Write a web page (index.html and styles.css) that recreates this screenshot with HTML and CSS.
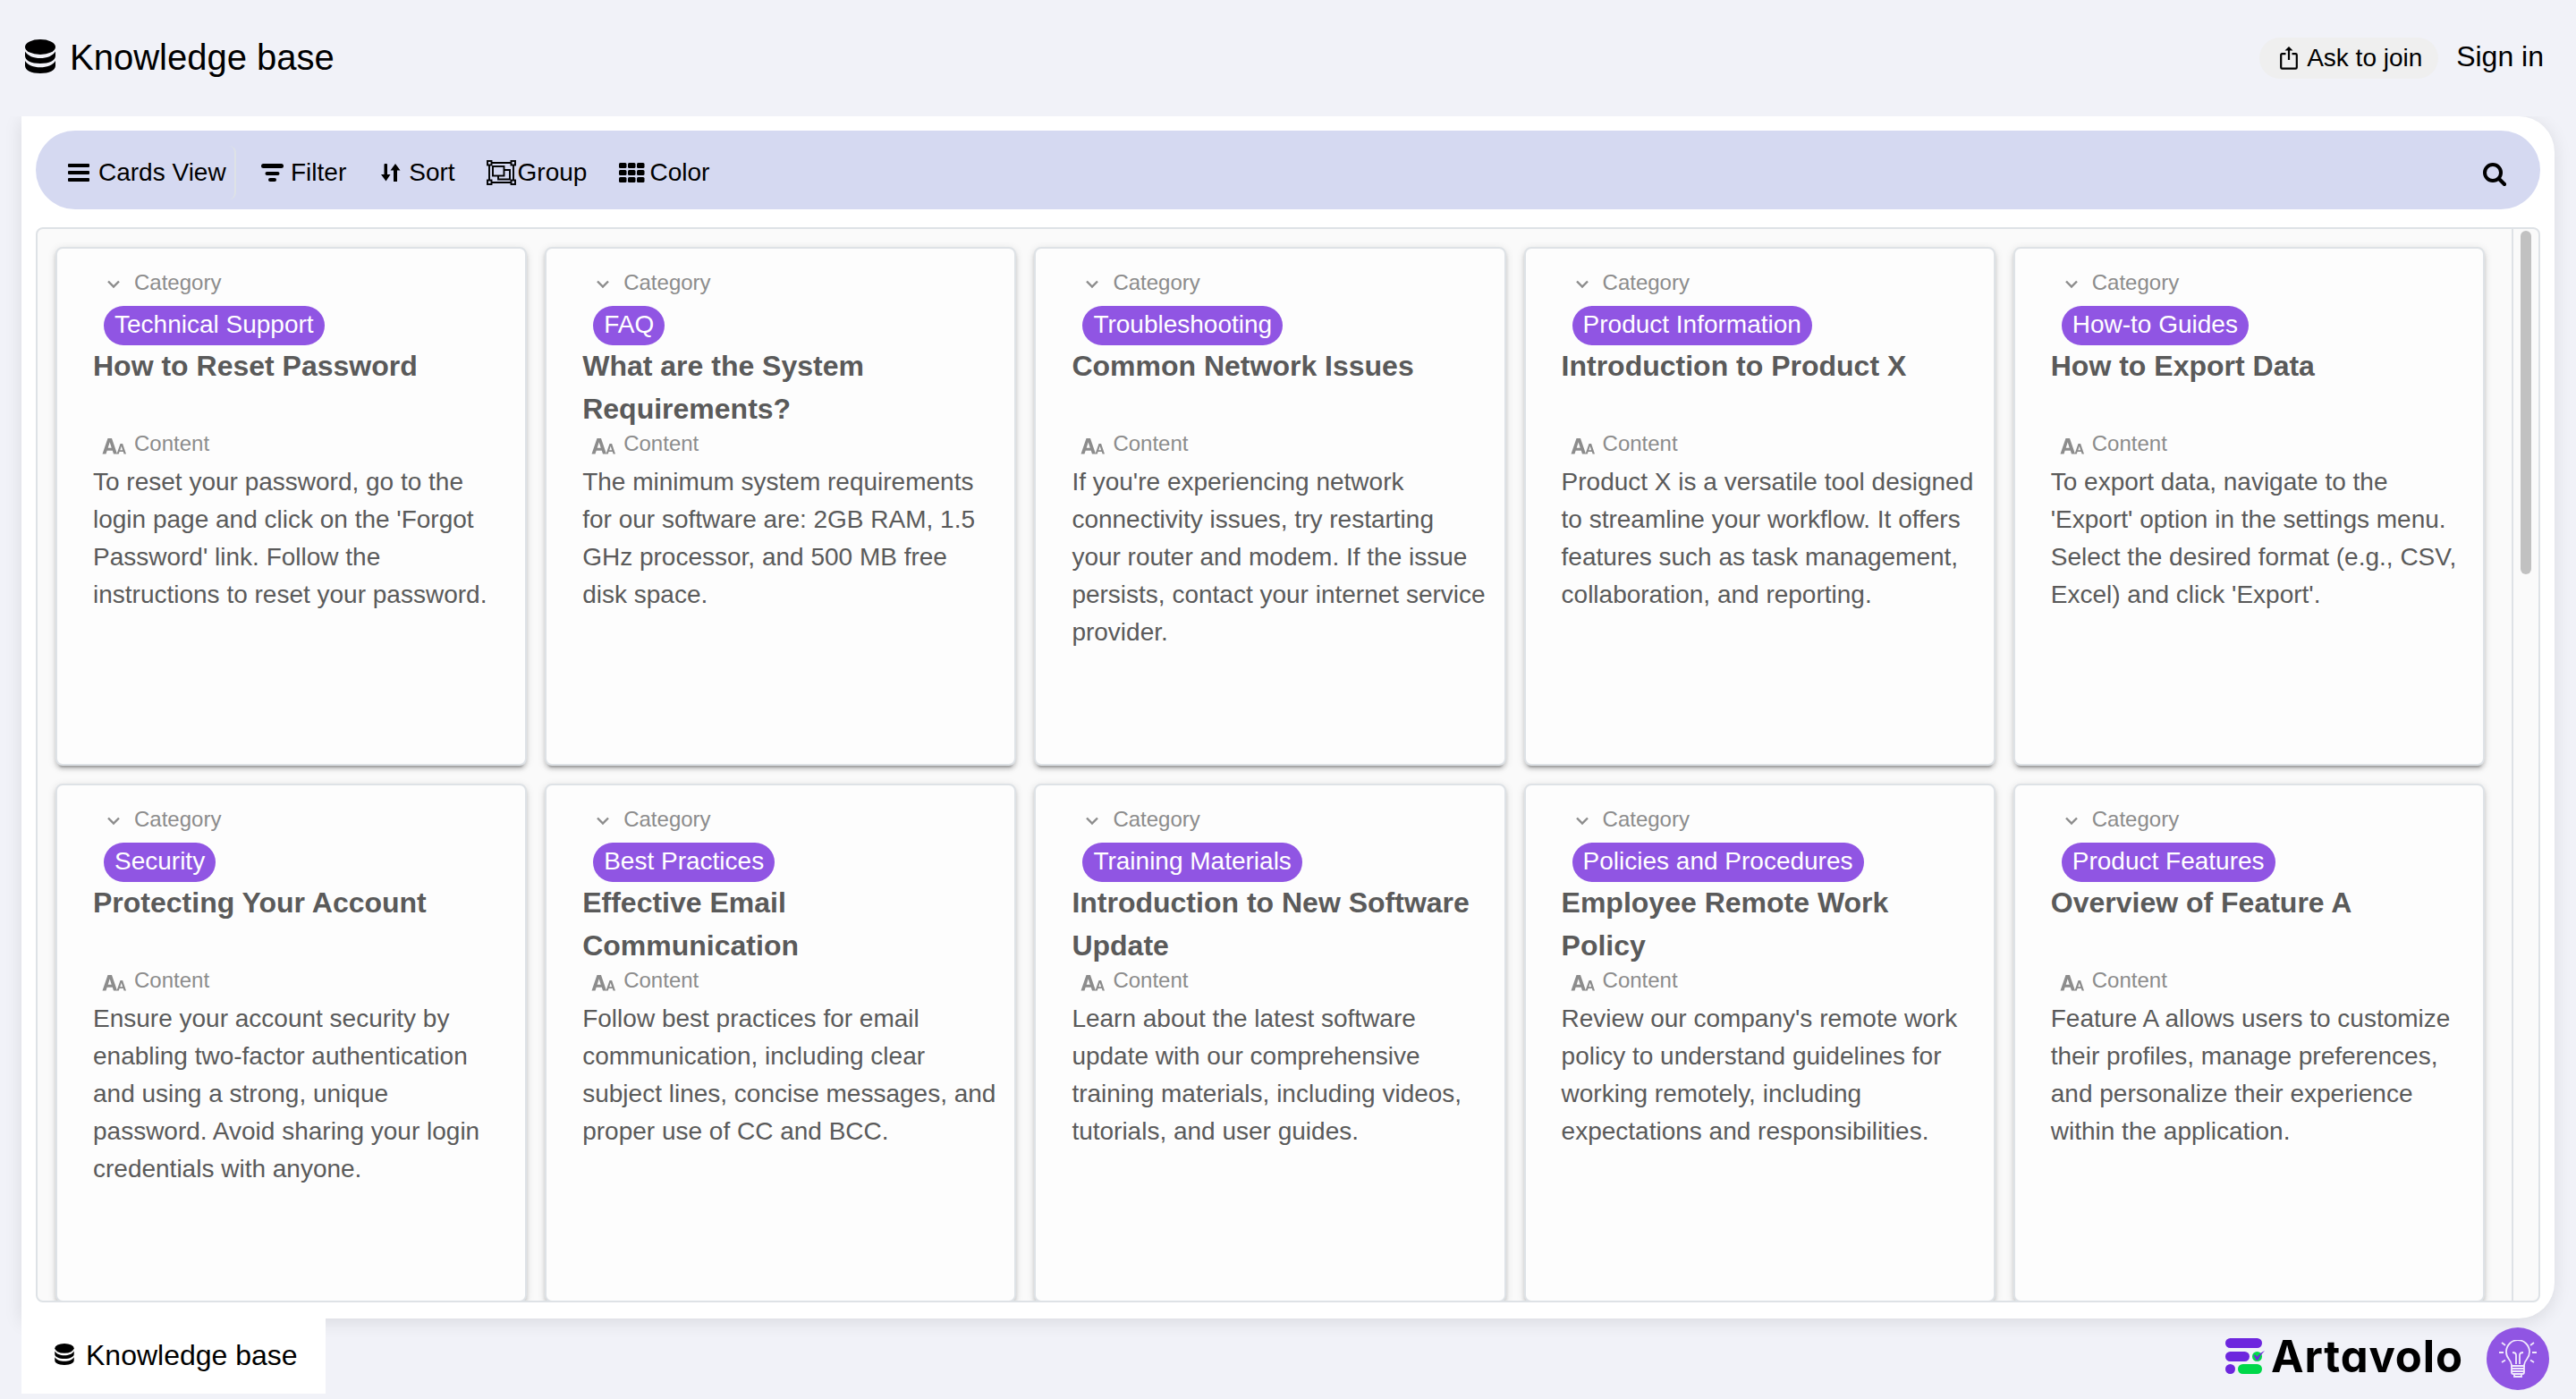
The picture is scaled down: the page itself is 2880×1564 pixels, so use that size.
FILE: index.html
```html
<!DOCTYPE html>
<html lang="en">
<head>
  <meta charset="UTF-8">
  <meta name="viewport" content="width=device-width, initial-scale=1.0">
  <title>Knowledge base</title>
  <link rel="stylesheet" href="styles.css">
</head>
<body>
  <!-- shared icons -->
  <svg class="defs" width="0" height="0">
    <symbol id="database" viewBox="0 0 34 38">
      <ellipse cx="17" cy="8.5" rx="17" ry="8.5"/>
      <path d="M0 13.500c3 5 9.500 7.500 17 7.500s14-2.500 17-7.500v5c0 5-7 8.500-17 8.500s-17-3.500-17-8.500z"/>
      <path d="M0 24c3 5 9.500 7.300 17 7.300s14-2.300 17-7.300v5.500c0 5-7 8.500-17 8.500s-17-3.500-17-8.500z"/>
    </symbol>
    <symbol id="chevron" viewBox="0 0 14 10">
      <path d="M1 1.500L7 7.500L13 1.500" fill="none" stroke="currentColor" stroke-width="2.400"/>
    </symbol>
    <symbol id="letters" viewBox="0 0 26 18">
      <path fill-rule="evenodd" d="M0 17.500L6 0h4.500l6 17.500h-4l-1.200-3.700H5.200L4 17.500zM6.200 10.800h4L8.200 4.300z"/>
      <path fill-rule="evenodd" d="M16 17.500L20 6h2.600l3.900 11.500h-2.400l-.8-2.400h-4.200l-.8 2.400zM19.800 13.200h2.800L21.200 8.800z"/>
    </symbol>
  </svg>

  <header class="header">
    <div class="title">
      <svg class="title-icon"><use href="#database"/></svg>
      <span>Knowledge base</span>
    </div>
    <div class="account">
      <button class="join">
        <svg width="20" height="26" viewBox="0 0 20 26">
          <path d="M6.500 8.200H2.500Q1.200 8.200 1.200 9.500V23.300Q1.200 24.700 2.500 24.700H17.500Q18.800 24.700 18.800 23.300V9.500Q18.800 8.200 17.500 8.200H13.500" fill="none" stroke="#000" stroke-width="2.200"/>
          <path d="M10 2V15" stroke="#000" stroke-width="2.200"/>
          <path d="M10 0L14.500 4.500H5.500z"/>
        </svg>
        <span>Ask to join</span>
      </button>
      <a class="signin">Sign in</a>
    </div>
  </header>

  <main class="panel">
    <div class="toolbar">
      <button class="tool view">
        <svg width="24" height="20" viewBox="0 0 24 20">
          <rect width="24" height="4" rx="1"/><rect y="8" width="24" height="4" rx="1"/><rect y="16" width="24" height="4" rx="1"/>
        </svg>
        Cards View
      </button>
      <button class="tool filter">
        <svg width="25" height="20" viewBox="0 0 25 20">
          <rect width="25" height="5" rx="2.500"/><rect x="4.500" y="9" width="16" height="4" rx="2"/><rect x="8" y="16" width="9" height="4" rx="2"/>
        </svg>
        Filter
      </button>
      <button class="tool sort">
        <svg width="22" height="20" viewBox="0 0 22 20">
          <path d="M3.500 1a1 1 0 0 1 1-1H6a1 1 0 0 1 1 1v11h3.500L5.500 19.500L0 12h3.500z"/>
          <path d="M14 19.500V7.500H10.500L16 0l5.500 7.500H18v12a1 1 0 0 1-1 1h-2a1 1 0 0 1-1-1z"/>
        </svg>
        Sort
      </button>
      <button class="tool group">
        <svg width="33" height="28" viewBox="0 0 33 28" fill="none" stroke="#000" stroke-width="1.900">
          <path d="M6 3H27M6 25H27M3 6V22M30 6V22"/>
          <rect x="1" y="1" width="4.500" height="4.500"/><rect x="27.500" y="1" width="4.500" height="4.500"/>
          <rect x="1" y="22.500" width="4.500" height="4.500"/><rect x="27.500" y="22.500" width="4.500" height="4.500"/>
          <rect x="7" y="7" width="12.500" height="10.500"/>
          <path d="M19.500 11H26V21.500H13V17.500"/>
        </svg>
        Group
      </button>
      <button class="tool color">
        <svg width="29" height="22" viewBox="0 0 29 22">
          <rect width="8.500" height="6" rx="1.500"/><rect x="10" width="8.500" height="6" rx="1.500"/><rect x="20" width="8.500" height="6" rx="1.500"/>
          <rect y="8" width="8.500" height="6" rx="1.500"/><rect x="10" y="8" width="8.500" height="6" rx="1.500"/><rect x="20" y="8" width="8.500" height="6" rx="1.500"/>
          <rect y="16" width="8.500" height="6" rx="1.500"/><rect x="10" y="16" width="8.500" height="6" rx="1.500"/><rect x="20" y="16" width="8.500" height="6" rx="1.500"/>
        </svg>
        Color
      </button>
      <button class="tool search">
        <svg width="26" height="26" viewBox="0 0 26 26" fill="none" stroke="#000">
          <circle cx="11" cy="11" r="9" stroke-width="4"/>
          <path d="M18 18L24 24" stroke-width="4.200" stroke-linecap="round"/>
        </svg>
      </button>
    </div>

    <div class="board">
      <div class="cards">
        <div class="card">
          <div class="label"><svg class="chevron"><use href="#chevron"/></svg>Category</div>
          <span class="badge">Technical Support</span>
          <h2>How to Reset Password</h2>
          <div class="label"><svg class="letters"><use href="#letters"/></svg>Content</div>
          <p>To reset your password, go to the login page and click on the 'Forgot Password' link. Follow the instructions to reset your password.</p>
        </div>
        <div class="card">
          <div class="label"><svg class="chevron"><use href="#chevron"/></svg>Category</div>
          <span class="badge">FAQ</span>
          <h2>What are the System Requirements?</h2>
          <div class="label"><svg class="letters"><use href="#letters"/></svg>Content</div>
          <p>The minimum system requirements for our software are: 2GB RAM, 1.5 GHz processor, and 500 MB free disk space.</p>
        </div>
        <div class="card">
          <div class="label"><svg class="chevron"><use href="#chevron"/></svg>Category</div>
          <span class="badge">Troubleshooting</span>
          <h2>Common Network Issues</h2>
          <div class="label"><svg class="letters"><use href="#letters"/></svg>Content</div>
          <p>If you're experiencing network connectivity issues, try restarting your router and modem. If the issue persists, contact your internet service provider.</p>
        </div>
        <div class="card">
          <div class="label"><svg class="chevron"><use href="#chevron"/></svg>Category</div>
          <span class="badge">Product Information</span>
          <h2>Introduction to Product X</h2>
          <div class="label"><svg class="letters"><use href="#letters"/></svg>Content</div>
          <p>Product X is a versatile tool designed to streamline your workflow. It offers features such as task management, collaboration, and reporting.</p>
        </div>
        <div class="card">
          <div class="label"><svg class="chevron"><use href="#chevron"/></svg>Category</div>
          <span class="badge">How-to Guides</span>
          <h2>How to Export Data</h2>
          <div class="label"><svg class="letters"><use href="#letters"/></svg>Content</div>
          <p>To export data, navigate to the 'Export' option in the settings menu. Select the desired format (e.g., CSV, Excel) and click 'Export'.</p>
        </div>
        <div class="card">
          <div class="label"><svg class="chevron"><use href="#chevron"/></svg>Category</div>
          <span class="badge">Security</span>
          <h2>Protecting Your Account</h2>
          <div class="label"><svg class="letters"><use href="#letters"/></svg>Content</div>
          <p>Ensure your account security by enabling two-factor authentication and using a strong, unique password. Avoid sharing your login credentials with anyone.</p>
        </div>
        <div class="card">
          <div class="label"><svg class="chevron"><use href="#chevron"/></svg>Category</div>
          <span class="badge">Best Practices</span>
          <h2>Effective Email Communication</h2>
          <div class="label"><svg class="letters"><use href="#letters"/></svg>Content</div>
          <p>Follow best practices for email communication, including clear subject lines, concise messages, and proper use of CC and BCC.</p>
        </div>
        <div class="card">
          <div class="label"><svg class="chevron"><use href="#chevron"/></svg>Category</div>
          <span class="badge">Training Materials</span>
          <h2>Introduction to New Software Update</h2>
          <div class="label"><svg class="letters"><use href="#letters"/></svg>Content</div>
          <p>Learn about the latest software update with our comprehensive training materials, including videos, tutorials, and user guides.</p>
        </div>
        <div class="card">
          <div class="label"><svg class="chevron"><use href="#chevron"/></svg>Category</div>
          <span class="badge">Policies and Procedures</span>
          <h2>Employee Remote Work Policy</h2>
          <div class="label"><svg class="letters"><use href="#letters"/></svg>Content</div>
          <p>Review our company's remote work policy to understand guidelines for working remotely, including expectations and responsibilities.</p>
        </div>
        <div class="card">
          <div class="label"><svg class="chevron"><use href="#chevron"/></svg>Category</div>
          <span class="badge">Product Features</span>
          <h2>Overview of Feature A</h2>
          <div class="label"><svg class="letters"><use href="#letters"/></svg>Content</div>
          <p>Feature A allows users to customize their profiles, manage preferences, and personalize their experience within the application.</p>
        </div>
      </div>
      <div class="scrollbar"><div class="thumb"></div></div>
    </div>
  </main>

  <footer class="footer">
    <div class="tab">
      <svg class="tab-icon"><use href="#database"/></svg>
      <span>Knowledge base</span>
    </div>
    <div class="brand">
      <svg width="44" height="40" viewBox="0 0 44 40">
        <g fill="#6d26de">
          <rect width="41" height="11" rx="5.500"/>
          <rect y="15" width="27" height="11" rx="5.500"/>
          <circle cx="5.500" cy="34.500" r="5.500"/>
        </g>
        <g fill="#00d84a">
          <rect x="14" y="29" width="27" height="11" rx="5.500"/>
          <circle cx="35.500" cy="20.500" r="5.500"/>
        </g>
        <path d="M31.500 18.500L34 19L35.500 21Q38 17 44 14Q39.500 18 36.500 24.500H34.500z" fill="#6d26de"/>
      </svg>
      <span class="brand-name">Artavolo</span>
    </div>
    <button class="tips">
      <svg width="42" height="42" viewBox="0 0 42 42" fill="none" stroke="#f0e8fc" stroke-width="1.800">
        <path d="M14 29Q14 25 11 21.500A13 13 0 1 1 31 21.500Q28 25 28 29z"/>
        <path d="M19 27V17Q19 14 15 14M23 27V17Q23 14 27 14"/>
        <path d="M14 29V36Q14 38 16 38H26Q28 38 28 36V29M14 32H28M14 35H28M17 38V41H25V38"/>
        <path d="M0 14H5M37 14H42M3 3L7 6M39 3L35 6M3 25L7 22.500M39 25L35 22.500"/>
      </svg>
    </button>
  </footer>
</body>
</html>
```
FILE: styles.css
```css
* {
  box-sizing: border-box;
}

body {
  margin: 0;
  height: 1564px;
  overflow: hidden;
  background: #f1f2f8;
  font-family: "Liberation Sans", Arial, sans-serif;
  color: #000;
}

button {
  border: none;
  background: none;
  padding: 0;
  font-family: inherit;
  color: #000;
}

svg {
  flex: none;
}

.defs {
  display: block;
  height: 0;
}

/* Header */
.header {
  position: relative;
  z-index: 1;
  display: flex;
  justify-content: space-between;
  height: 130px;
  padding: 0 36px 4px 28px;
  background: #f1f2f8;
}

.title {
  display: flex;
  align-items: center;
  gap: 16px;
  font-size: 40px;
}

.title span {
  margin-top: 3px;
}

.title-icon {
  width: 34px;
  height: 38px;
}

.account {
  display: flex;
  align-items: center;
  gap: 20px;
}

.join {
  display: flex;
  align-items: center;
  gap: 10px;
  width: 200px;
  height: 46px;
  margin-top: 4px;
  padding-left: 23px;
  border-radius: 23px;
  background: #efefef;
  font-size: 28px;
}

.signin {
  font-size: 32px;
}

/* Main panel */
.panel {
  height: 1344px;
  margin: 0 24px;
  padding: 16px 16px 0;
  background: #fff;
  border-radius: 0 40px 40px 0;
  box-shadow: 0 4px 20px rgba(0, 0, 0, 0.1);
}

.toolbar {
  display: flex;
  align-items: center;
  height: 88px;
  padding: 5px 38px 0 22px;
  border-radius: 44px;
  background: #d5d9f1;
}

.tool {
  display: flex;
  align-items: center;
  height: 60px;
  gap: 10px;
  font-size: 28px;
}

.view {
  width: 202px;
  padding-left: 14px;
  border-right: 2px solid #dee2e6;
  border-radius: 8px;
}

.filter {
  margin-left: 28px;
  gap: 8px;
}

.sort {
  margin-left: 39px;
  gap: 9px;
}

.group {
  margin-left: 35px;
  gap: 2px;
}

.color {
  margin-left: 36px;
  gap: 5px;
}

.search {
  margin-left: auto;
  padding-top: 4px;
}

/* Cards */
.board {
  display: flex;
  height: 1202px;
  margin-top: 20px;
  border: 2px solid #dee2e6;
  border-radius: 8px;
  background: #fafafa;
  overflow: hidden;
}

.cards {
  flex: 1;
  display: grid;
  grid-template-columns: repeat(5, 527.2px);
  grid-auto-rows: 580px;
  gap: 20px;
  padding: 20px;
}

.card {
  padding: 24px 20px 0 40px;
  border: 2px solid #dee2e6;
  border-radius: 8px;
  background: #fdfdfd;
  box-shadow: 0 6px 2px -4px rgba(0, 0, 0, 0.2), 0 4px 4px rgba(0, 0, 0, 0.14), 0 2px 10px rgba(0, 0, 0, 0.12);
  color: #5a5a5a;
}

.label {
  display: flex;
  align-items: center;
  height: 28px;
  padding-left: 10px;
  font-size: 24px;
  color: #8c8c8c;
}

.chevron {
  width: 14px;
  height: 10px;
  margin: 3px 16px 0 6px;
}

.letters {
  width: 27px;
  height: 18px;
  margin: 5px 9px 0 0;
  fill: #8c8c8c;
}

.badge {
  display: block;
  width: fit-content;
  height: 44px;
  margin: 12px 0 0 12px;
  padding: 0 12px;
  border-radius: 22px;
  background: #9055e3;
  color: #fff;
  font-size: 28px;
  line-height: 42px;
}

.card h2 {
  height: 97px;
  margin: -1px 0 0;
  font-size: 32px;
  line-height: 48px;
}

.card p {
  margin: 8px 0 0;
  font-size: 28px;
  line-height: 42px;
}

.scrollbar {
  width: 30px;
  padding: 2px 8px;
  border-left: 2px solid #dee2e6;
}

.thumb {
  width: 12px;
  height: 384px;
  border-radius: 6px;
  background: #c1c1c1;
}

/* Footer */
.footer {
  display: flex;
  height: 90px;
  padding: 0 30px 0 24px;
}

.tab {
  position: relative;
  display: flex;
  align-items: center;
  gap: 13px;
  width: 340px;
  height: 84px;
  padding: 0 0 4px 37px;
  background: #fff;
  font-size: 32px;
}

.tab span {
  margin-top: 2px;
}

.tab-icon {
  width: 22px;
  height: 24px;
}

.brand {
  display: flex;
  align-items: center;
  gap: 7px;
  height: 84px;
  margin-left: auto;
}

.brand-name {
  width: 241px;
  font-family: Inter, sans-serif;
  font-size: 49px;
  font-weight: 700;
  font-feature-settings: "cv11";
  letter-spacing: 0.9px;
}

.tips {
  display: flex;
  align-items: center;
  justify-content: center;
  width: 70px;
  height: 70px;
  margin-top: 10px;
  border-radius: 50%;
  background: #9055e3;
}
```
